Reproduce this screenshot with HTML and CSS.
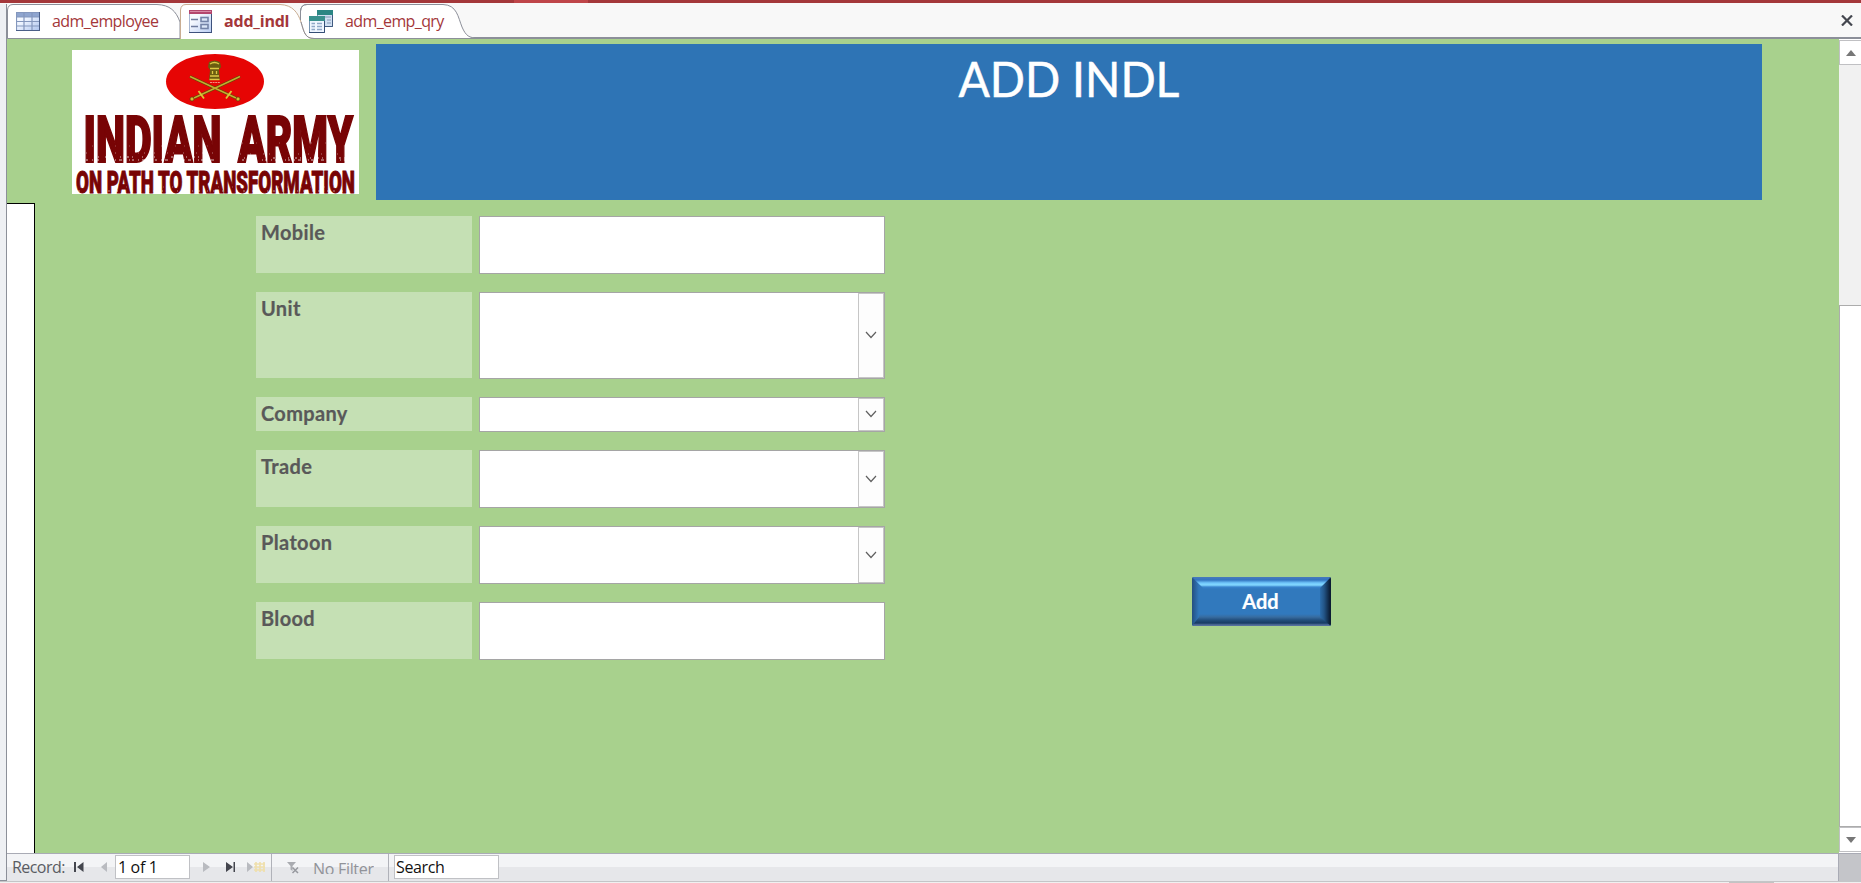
FILE: index.html
```html
<!DOCTYPE html>
<html lang="en">
<head>
<meta charset="utf-8">
<title>add_indl</title>
<link rel="stylesheet" href="styles.css">
</head>
<body>
<div class="app">
  <div class="ribbon-edge"><div class="ribbon-mark"></div></div>
  <div class="window">
    <div class="nav-pane"></div>
    <div class="doc">
      <div class="tabs">
        <svg class="tab-shapes" width="480" height="36" viewBox="7 3 480 36">
          <path d="M300.500 39V11Q301 4.500 307 4.500H443C457 5 458 17 462 27C466 36 469 38 478 38" fill="#fff" stroke="#8c8f99"/>
          <path d="M7.500 38.500V10Q8 4.500 13 4.500H157C170 5 176 11 180 22V38.500Z" fill="#fff" stroke="#8c8f99"/>
          <path d="M180.500 39V10Q181 4.500 186 4.500H280C293 5 298 11 301 22C304 34 307 38.500 314 39Z" fill="#fff"/>
          <path d="M180.500 39V10Q181 4.500 186 4.500H280C293 5 298 13 301 22C304 32 305 38.500 314 38.500" fill="none" stroke="#c9ad92"/>
          <path d="M300.500 20V11Q301 4.500 307 4.500M301 22C304 32 305 38.500 314 38.500H478" fill="none" stroke="#8c8f99"/>
        </svg>
        <div class="tab tab-table">
          <svg width="24" height="20" viewBox="0 0 24 20">
            <defs><linearGradient id="cells" x1="0" y1="0" x2="1" y2="1"><stop offset="0" stop-color="#fff"/><stop offset=".4" stop-color="#eef4ff"/><stop offset="1" stop-color="#a9c0ec"/></linearGradient></defs>
            <rect width="24" height="19" fill="url(#cells)"/><rect width="24" height="5" fill="#8fa5cf"/>
            <path d="M.500 0V19M8 0V19M16 0V19M0 .500H24M0 5H24M0 9.500H24M0 14H24" stroke="#8497bd" stroke-width="1.200"/>
            <path d="M23.500 0V19M0 18.500H24" stroke="#4b5f88"/>
          </svg>
          <span class="tab-name">adm_employee</span>
        </div>
        <div class="tab tab-form">
          <svg width="24" height="24" viewBox="0 0 24 24">
            <defs><linearGradient id="page" x1="0" y1="0" x2="1" y2="1"><stop offset=".3" stop-color="#f7faff"/><stop offset="1" stop-color="#b9cdf2"/></linearGradient></defs>
            <rect x=".5" y=".5" width="22" height="22" fill="url(#page)" stroke="#a9b8d4"/><rect width="23" height="4" fill="#b4476e"/><rect x="1" y="1" width="21" height="1" fill="#d889a5"/>
            <path d="M0 22.500H23M22.500 4V23" stroke="#3e527d"/>
            <path d="M2 9.500H9M2 16.500H9" stroke="#6f7c9e" stroke-width="1.500"/>
            <rect x="12" y="7.500" width="7" height="4" fill="#dce7f8" stroke="#7484a8" stroke-width="1.600"/><rect x="12" y="14.500" width="7" height="4" fill="#dce7f8" stroke="#7484a8" stroke-width="1.600"/>
          </svg>
          <span class="tab-name">add_indl</span>
        </div>
        <div class="tab tab-query">
          <svg width="24" height="23" viewBox="0 0 24 23">
            <rect x="8.500" y=".5" width="15" height="16" fill="#cfdff2" stroke="#7895b0"/><rect x="8" width="16" height="5" fill="#2b8684"/>
            <path d="M16 7H22M18 10H22M18 13H22" stroke="#8399b7"/><path d="M23.500 5V16.500H16" stroke="#405a80" fill="none"/>
            <rect x=".5" y="6.500" width="15" height="16" fill="#eff6ff" stroke="#7895b0"/><rect y="6" width="16" height="5" fill="#3a918e"/>
            <path d="M2.500 13.500H6M8 13.500H13M2.500 16.500H6M8 16.500H13M2.500 19.500H6M8 19.500H13" stroke="#8fa8c7" stroke-width="1.500"/><path d="M15.500 11V22.500H0" stroke="#344d75" fill="none"/>
          </svg>
          <span class="tab-name">adm_emp_qry</span>
        </div>
        <svg class="close" width="12" height="11" viewBox="0 0 12 11"><path d="M1 .5L11 10.500M11 .5L1 10.500" stroke="#44474f" stroke-width="2.200"/></svg>
      </div>
      <div class="view">
        <div class="form">
          <div class="form-header">
            <svg class="logo" width="287" height="144" viewBox="0 0 287 144">
              <rect width="287" height="144" fill="#fff"/>
              <ellipse cx="143" cy="31.500" rx="49" ry="27.500" fill="#e60504"/>
              <g fill="none">
                <path d="M118 26.500L164 48M168 26.500L122 48" stroke="#5c4a08" stroke-width="3"/>
                <path d="M118 26.500L164 48M168 26.500L122 48" stroke="#c4ab30" stroke-width="1.500"/>
                <path d="M126.500 41L132 48.500M159.500 41L154 48.500" stroke="#dcc638" stroke-width="1.800"/>
              </g>
              <g fill="#d5bd34" stroke="#453d08" stroke-width=".6"><circle cx="120" cy="49" r="2"/><circle cx="166" cy="49" r="2"/></g>
              <path d="M137 12Q142.500 9 148 12L149 17L147 20L148 30H137L138 20L136 17Z" fill="#6b5d10"/>
              <path d="M138 14Q142.500 11 147 14M138 18.500H147M140.500 21V24M144.500 21V24M138 26H147M137.500 29.500H147.500" stroke="#dcc845" fill="none" stroke-width="1.300"/>
              <path d="M138 32.500H148" stroke="#f29080" stroke-dasharray="2 .6"/>
              <text class="logo-name" transform="translate(11.500 111.500) scale(1 2.020)" x="0" y="0" textLength="138" lengthAdjust="spacingAndGlyphs">INDIAN</text>
              <text class="logo-name" transform="translate(166 111.500) scale(1 2.020)" x="0" y="0" textLength="115" lengthAdjust="spacingAndGlyphs">ARMY</text>
              <text class="logo-motto" transform="translate(4 143) scale(1 1.350)" x="0" y="0" textLength="279" lengthAdjust="spacingAndGlyphs">ON PATH TO TRANSFORMATION</text>
              <g stroke="#fff" stroke-width="1" opacity=".75">
                <path d="M14 110H150M170 110H278" stroke-dasharray="2 4 1 3 3 7 1 2"/>
                <path d="M26 107H140M172 108H278" stroke-dasharray="1 6 2 3 1 9"/>
                <path d="M14 103H150M168 104H278" stroke-dasharray="1 9 1 12 1 5" opacity=".6"/>
                <path d="M20 96H150M170 93H278M8 137H282" stroke-dasharray="1 13 1 8" opacity=".4"/>
                <path d="M6 141H282" stroke-dasharray="2 7 1 5" opacity=".7"/>
              </g>
            </svg>
            <h1 class="banner"><span class="banner-text">ADD INDL</span></h1>
          </div>
          <div class="form-body">
            <div class="record-selector"></div>
            <div class="fields">
              <div class="field"><div class="label">Mobile</div><div class="input"></div></div>
              <div class="field tall"><div class="label">Unit</div><div class="input"><div class="drop"><svg width="12" height="8" viewBox="0 0 12 8"><path d="M1 1L6 6.500L11 1" fill="none" stroke="#606060" stroke-width="1.200"/></svg></div></div></div>
              <div class="field short"><div class="label">Company</div><div class="input"><div class="drop"><svg width="12" height="8" viewBox="0 0 12 8"><path d="M1 1L6 6.500L11 1" fill="none" stroke="#606060" stroke-width="1.200"/></svg></div></div></div>
              <div class="field"><div class="label">Trade</div><div class="input"><div class="drop"><svg width="12" height="8" viewBox="0 0 12 8"><path d="M1 1L6 6.500L11 1" fill="none" stroke="#606060" stroke-width="1.200"/></svg></div></div></div>
              <div class="field"><div class="label">Platoon</div><div class="input"><div class="drop"><svg width="12" height="8" viewBox="0 0 12 8"><path d="M1 1L6 6.500L11 1" fill="none" stroke="#606060" stroke-width="1.200"/></svg></div></div></div>
              <div class="field"><div class="label">Blood</div><div class="input"></div></div>
            </div>
            <div class="add"><span>Add</span></div>
          </div>
        </div>
        <div class="scroll">
          <div class="scroll-btn"><svg width="10" height="6" viewBox="0 0 10 6"><path d="M5 0L10 6H0Z" fill="#777"/></svg></div>
          <div class="track"></div>
          <div class="thumb"></div>
          <div class="scroll-btn down"><svg width="10" height="6" viewBox="0 0 10 6"><path d="M0 0H10L5 6Z" fill="#777"/></svg></div>
        </div>
      </div>
      <div class="navbar">
        <span class="record">Record:</span>
        <svg class="nav-icons-left" width="36" height="12" viewBox="0 0 36 12"><path d="M0 1H2V11H0ZM9.500 1V11L3 6Z" fill="#44464e"/><path d="M33 1V11L27 6Z" fill="#b9bbc0"/></svg>
        <div class="box pos">1 of 1</div>
        <svg class="nav-icons-right" width="64" height="12" viewBox="0 0 64 12"><path d="M0 1V11L7 6ZM44 1V11L50 6Z" fill="#b9bbc0"/><path d="M23 1V11L30 6ZM30.500 1H32V11H30.500Z" fill="#44464e"/><path d="M51 3H62M51 6H62M51 9H62M53 1V11M57 1V11M61 1V11" stroke="#efdfad" stroke-width="1.700"/></svg>
        <div class="filter">
          <svg width="12" height="12" viewBox="0 0 12 12"><path d="M0 0H9L5.500 4V9L3.500 7.500V4Z" fill="#a9abb0"/><path d="M5.500 5.500L11 11M11 5.500L5.500 11" stroke="#96989e" stroke-width="1.500"/></svg>
          <span class="no-filter">No Filter</span>
        </div>
        <div class="box search">Search</div>
        <div class="corner"></div>
      </div>
    </div>
  </div>
  <div class="bottom-edge"><div class="bottom-mark"></div></div>
</div>
</body>
</html>
```

FILE: styles.css
```css
* { box-sizing: border-box; }
body { margin: 0; overflow: hidden; font-family: "Open Sans", "Noto Sans", sans-serif; }
svg { display: block; flex: none; }
.app { width: 1861px; height: 883px; display: flex; flex-direction: column; background: #f8f8f8; }
.ribbon-edge { height: 3px; background: #a4373a; padding-left: 514px; }
.ribbon-mark { width: 74px; height: 3px; background: #bf4549; }
.window { height: 878px; display: flex; }
.nav-pane { width: 7px; height: 877px; margin-top: 1px; background: #eef0f3; border-right: 1px solid #8c9099; border-bottom: 1px solid #8c9099; }
.doc { flex: 1; display: flex; flex-direction: column; }

.tabs { position: relative; height: 36px; display: flex; align-items: flex-start; background: #f8f8f8; border-bottom: 2px solid #8c8f99; }
.tab-shapes { position: absolute; left: 0; top: 0; }
.tab { position: relative; display: flex; align-items: flex-start; color: #a4373a; font-size: 16px; line-height: 22px; padding-top: 7px; }
.tab-table { width: 173px; padding-left: 9px; gap: 12px; }
.tab-table svg { margin-top: 2px; }
.tab-form { width: 120px; padding-left: 9px; gap: 11px; font-weight: 700; }
.tab-query { width: 180px; padding-left: 9px; gap: 12px; }
.tab-name { white-space: nowrap; letter-spacing: -.62px; }
.tab-form .tab-name { letter-spacing: -.2px; }
.close { position: relative; margin: 12px 8px 0 auto; }

.view { height: 814px; display: flex; }
.form { width: 1832px; background: #a8d18d; display: flex; flex-direction: column; }
.form-header { height: 164px; display: flex; align-items: flex-start; padding: 5px 0 0 65px; gap: 17px; }
.logo { margin-top: 6px; }
.logo-name { font: 900 32px Roboto, sans-serif; fill: #780405; stroke: #780405; stroke-width: 1px; }
.logo-motto { font: 900 23px Roboto, sans-serif; fill: #780405; stroke: #780405; stroke-width: .7px; }
.banner { margin: 0; width: 1386px; height: 156px; padding-top: 5px; background: #2e74b5; color: #fff; font: 400 49px/58px Lato, sans-serif; text-align: center; }
.banner-text { display: inline-block; transform: scaleX(.945); -webkit-text-stroke: .5px #fff; }
.form-body { height: 650px; display: flex; align-items: flex-start; }
.record-selector { width: 28px; height: 650px; background: #fff; border: solid #000; border-width: 1px 1px 0 0; }
.fields { margin: 13px 0 0 221px; display: flex; flex-direction: column; gap: 18px; }
.field { height: 58px; display: flex; gap: 7px; }
.tall { height: 87px; }
.short { height: 35px; }
.label { width: 216px; margin-bottom: 1px; padding: 2px 5px 0; background: #c5e0b4; color: #595959; font: 700 20px/28px Lato, sans-serif; letter-spacing: .35px; -webkit-text-stroke: .2px #595959; }
.input { width: 406px; background: #fff; border: 1px solid #a5a5a5; display: flex; justify-content: flex-end; }
.drop { width: 26px; background: #fdfdfd; border: 1px solid #c6c6c6; display: flex; align-items: center; justify-content: center; }
.drop svg { margin: 0 1px 1px 0; }
.add { width: 139px; height: 49px; margin: 374px 0 0 307px; display: flex; justify-content: center; border-radius: 2px; border: solid transparent; border-width: 10px 9px 8px 7px; background: #3179bd; position: relative; color: #fff; font: 700 20px/29px Lato, sans-serif; -webkit-text-stroke: .2px #fff; }
.add::before { content: ""; position: absolute; left: -7px; top: -10px; width: 139px; height: 49px; border-radius: 2px; background: linear-gradient(90deg, #244f80, #3179bd 7px, #3179bd 126px, #235587 132px, #0b1c34 138px); }
.add::after { content: ""; position: absolute; left: -7px; top: -10px; width: 139px; height: 49px; border-radius: 2px; clip-path: polygon(0 0, 100% 0, 128px 11px, 128px 40px, 100% 100%, 0 100%, 7px 40px, 11px 11px); background: linear-gradient(180deg, #497abb 0, #3274c0 3px, #72c8fb 6px, #83d8ff 8px, #3984cd 10px, #3179bd 12px, #3179bd 37px, #376ca0 40px, #234f7d 43px, #173b64 46px, #546f9d 48px); }
.add span { position: relative; z-index: 1; }

.scroll { width: 22px; display: flex; flex-direction: column; background: #fff; padding-top: 1px; }
.scroll-btn { height: 25px; background: #fff; border: solid #c0c0c3; border-width: 1px 0 1px 1px; display: flex; align-items: center; padding-left: 6px; }
.track { height: 240px; background: #f1f1f1; }
.thumb { height: 522px; background: #fff; border: solid #acacac; border-width: 1px 0 1px 1px; }

.navbar { height: 28px; display: flex; align-items: flex-start; border-top: 1px solid #a9abb5; background: linear-gradient(#f3f4f6 13px, #e6e7ea 13px); font-size: 16px; line-height: 22px; }
.record { width: 61px; padding: 2px 0 0 5px; color: #5a5c63; white-space: nowrap; letter-spacing: -.55px; }
.nav-icons-left { margin: 7px 6px 0 6px; }
.box { height: 24px; margin-top: 1px; border: 1px solid #c0c1c5; background: #fff; color: #111; padding-left: 1px; white-space: nowrap; line-height: 23px; letter-spacing: -.35px; }
.pos { width: 75px; margin-left: -1px; padding-left: 2px; }
.nav-icons-right { margin: 7px 0 0 13px; }
.filter { width: 118px; height: 27px; margin-left: 4px; border: solid #b0b2b9; border-width: 0 1px; display: flex; gap: 14px; padding-left: 15px; }
.filter svg { margin-top: 8px; }
.no-filter { height: 20px; padding-top: 4px; overflow: hidden; color: #919399; white-space: nowrap; letter-spacing: -.3px; }
.search { width: 105px; margin-left: 5px; }
.corner { width: 23px; height: 27px; margin-left: auto; background: #c4c5c9; border-left: 1px solid #a9abb5; }
.bottom-edge { height: 2px; background: #f0f0f0; border-top: 1px solid #c4c5c7; padding-left: 1729px; }
.bottom-mark { width: 45px; height: 1px; background: #c3c3c3; }
```
